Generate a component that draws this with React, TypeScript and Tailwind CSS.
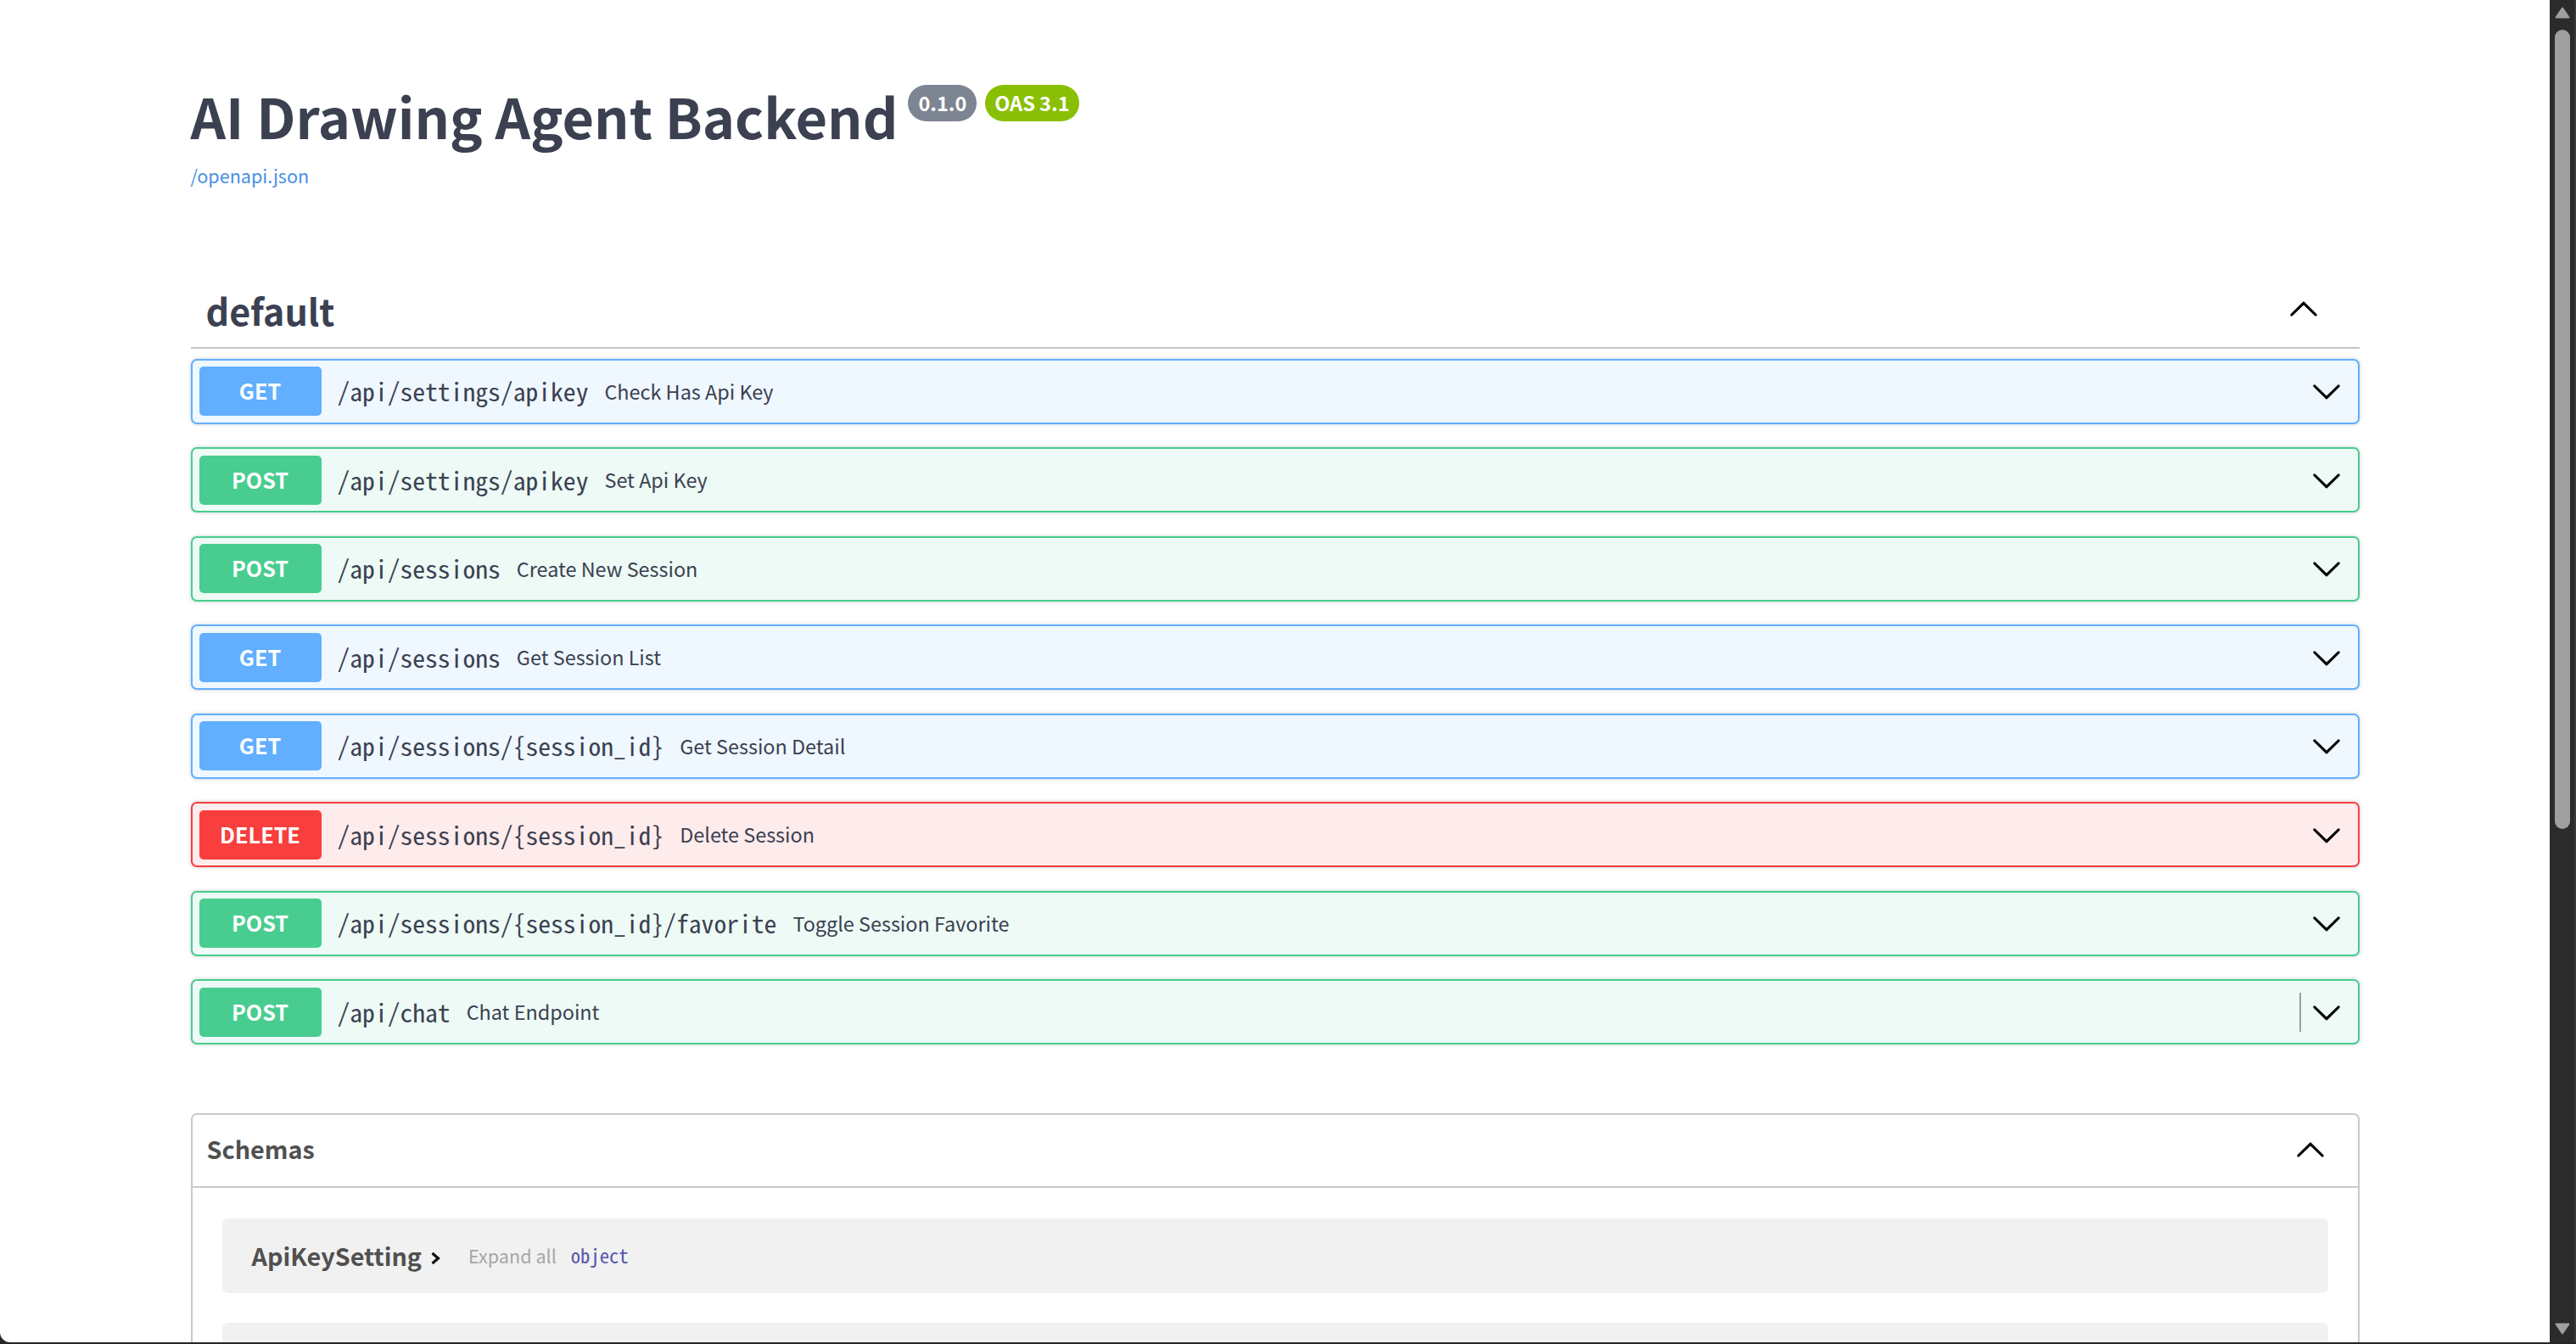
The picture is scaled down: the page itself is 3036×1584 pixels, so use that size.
import React from 'react';

type Op = { m: 'GET' | 'POST' | 'DELETE'; path: string; sum: string; divider?: boolean };

const ops: Op[] = [
  { m: 'GET', path: '/api/settings/apikey', sum: 'Check Has Api Key' },
  { m: 'POST', path: '/api/settings/apikey', sum: 'Set Api Key' },
  { m: 'POST', path: '/api/sessions', sum: 'Create New Session' },
  { m: 'GET', path: '/api/sessions', sum: 'Get Session List' },
  { m: 'GET', path: '/api/sessions/{session_id}', sum: 'Get Session Detail' },
  { m: 'DELETE', path: '/api/sessions/{session_id}', sum: 'Delete Session' },
  { m: 'POST', path: '/api/sessions/{session_id}/favorite', sum: 'Toggle Session Favorite' },
  { m: 'POST', path: '/api/chat', sum: 'Chat Endpoint', divider: true },
];

const rowStyle: Record<Op['m'], string> = {
  GET: 'border-[#61affe] bg-[#eff7ff]',
  POST: 'border-[#49cc90] bg-[#edfaf5]',
  DELETE: 'border-[#f93e3e] bg-[#feebeb]',
};
const badgeStyle: Record<Op['m'], string> = {
  GET: 'bg-[#61affe]',
  POST: 'bg-[#49cc90]',
  DELETE: 'bg-[#f93e3e]',
};

const ARROW =
  'M17.418 6.109c.272-.268.709-.268.979 0s.271.701 0 .969l-7.908 7.83c-.27.268-.707.268-.979 0l-7.908-7.83c-.27-.268-.27-.701 0-.969.271-.268.709-.268.979 0L10 13.25l7.418-7.141z';

function Arrow({ up = false }: { up?: boolean }) {
  return (
    <svg viewBox="0 0 20 20" className={up ? 'w-[36px] h-[36px] rotate-180 text-black' : 'w-[36px] h-[36px] text-black'}>
      <path d={ARROW} fill="currentColor" stroke="currentColor" strokeWidth="0.35" />
    </svg>
  );
}

function OpRow({ op }: { op: Op }) {
  return (
    <div
      className={`h-[77px] border-2 rounded-[7px] shadow-[0_0_5px_rgba(0,0,0,0.19)] flex items-center pl-[8px] pr-[19px] ${rowStyle[op.m]}`}
    >
      <div
        className={`w-[144px] h-[58px] rounded-[5px] flex items-center justify-center text-white font-bold text-[25.2px] font-['Noto_Sans_CJK_SC','Source_Sans_Pro',sans-serif] ${badgeStyle[op.m]}`}
      >
        {op.m}
      </div>
      <span className="ml-[19px] text-[29.6px] text-[#3b4151] font-['Noto_Sans_Mono_CJK_SC','Liberation_Mono',monospace] whitespace-pre">
        {op.path}
      </span>
      <span className="ml-[19px] text-[23.4px] text-[#3b4151] font-['Noto_Sans_CJK_SC','Source_Sans_Pro',sans-serif]">
        {op.sum}
      </span>
      <div className="flex-1" />
      {op.divider ? <div className="w-[2px] h-[46px] bg-[#9a9ea6] mr-[12px]" /> : null}
      <Arrow />
    </div>
  );
}

function Scrollbar() {
  return (
    <div className="w-[31px] h-[1582px] shrink-0 bg-[#2b2b2b] border-r-2 border-[#3a3a3a] flex flex-col pl-[6px]">
      <svg viewBox="0 0 18 14" className="w-[18px] h-[14px] mt-[8px]">
        <path d="M9 1.5 L16.5 12.5 L1.5 12.5 Z" fill="#9f9f9f" stroke="#9f9f9f" strokeWidth="2" strokeLinejoin="round" />
      </svg>
      <div className="w-[18px] h-[942px] mt-[13px] rounded-[9px] bg-[#9f9f9f]" />
      <div className="flex-1" />
      <svg viewBox="0 0 18 14" className="w-[18px] h-[14px] mb-[9px]">
        <path d="M9 12.5 L16.5 1.5 L1.5 1.5 Z" fill="#9f9f9f" stroke="#9f9f9f" strokeWidth="2" strokeLinejoin="round" />
      </svg>
    </div>
  );
}

export default function App() {
  return (
    <div className="w-[3036px] h-[1584px] bg-[#262626] flex flex-col overflow-hidden">
      <div className="flex h-[1582px] shrink-0">
        <div className="flex-1 h-[1582px] bg-white rounded-bl-[12px] overflow-hidden font-['Noto_Sans_CJK_SC','Source_Sans_Pro',sans-serif]">
          <div className="w-[2556px] mx-auto pt-[100px]">
            {/* Title */}
            <div className="flex items-start">
              <h1 className="mt-[4px] text-[64.8px] leading-none font-bold text-[#3b4151]">AI Drawing Agent Backend</h1>
              <span className="ml-[12px] h-[43px] px-[12px] rounded-full bg-[#7d8492] text-white font-bold text-[23.5px] flex items-center">
                0.1.0
              </span>
              <span className="ml-[10px] h-[43px] px-[11px] rounded-full bg-[#89bf04] text-white font-bold text-[23.5px] flex items-center">
                OAS 3.1
              </span>
            </div>
            <div className="mt-[26px] h-[24px] text-[21.6px] leading-[24px] text-[#4990e2]">/openapi.json</div>

            {/* Tag header */}
            <div className="mt-[102px] h-[90px] border-b-2 border-[#c4c6cb] flex items-center pl-[18px] pr-[48px]">
              <span className="text-[43px] font-bold text-[#3b4151]">default</span>
              <div className="flex-1" />
              <Arrow up />
            </div>

            <div className="mt-[12px] flex flex-col gap-[27.5px]">
              {ops.map((op, i) => (
                <OpRow key={i} op={op} />
              ))}
            </div>

            {/* Schemas */}
            <div className="mt-[80.5px] border-2 border-[#c8c9cc] rounded-[7px]">
              <div className="h-[86px] border-b-2 border-[#c8c9cc] flex items-center pl-[17px] pr-[38px]">
                <span className="text-[28.8px] font-bold text-[#505050] -mt-[4px]">Schemas</span>
                <div className="flex-1" />
                <Arrow up />
              </div>
              <div className="pt-[36px] px-[35px] flex flex-col gap-[35px]">
                <div className="h-[88px] rounded-[7px] bg-[#f1f1f1] flex items-center pl-[35px]">
                  <span className="text-[28.8px] font-bold text-[#505050]">ApiKeySetting</span>
                  <svg viewBox="0 0 12 16" className="w-[12px] h-[16px] ml-[10px] mt-[7px]">
                    <path d="M2.5 2 L9.5 8 L2.5 14" fill="none" stroke="#111" strokeWidth="3.2" />
                  </svg>
                  <span className="ml-[33px] text-[21.6px] text-[#a6a6a6]">Expand all</span>
                  <span className="ml-[17px] text-[22.6px] text-[#55a] font-['Noto_Sans_Mono_CJK_SC','Liberation_Mono',monospace]">
                    object
                  </span>
                </div>
                <div className="h-[88px] rounded-[7px] bg-[#f1f1f1]" />
              </div>
            </div>
          </div>
        </div>
        <Scrollbar />
      </div>
    </div>
  );
}
